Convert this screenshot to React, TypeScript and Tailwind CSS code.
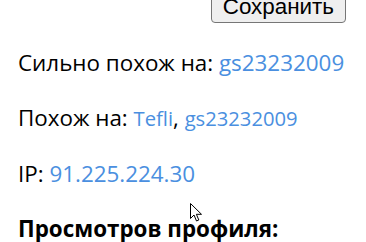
const link = "text-[#4a8fe0]"

export default function App() {
    return (
        <div className="relative h-[242px] w-[366px] overflow-hidden bg-white font-['Open_Sans',sans-serif] text-[22.4px] text-black">
            <div className="flex justify-end pr-[20px] -mt-[10px]">
                <button className="h-[33px] rounded-[4px] border border-[#767676] bg-[#efefef] px-[11px] font-['Liberation_Sans',Arial,sans-serif] text-[22.4px] leading-[24px] text-black">
                    Сохранить
                </button>
            </div>
            <div className="flex flex-col gap-[24px] pl-[18px] pt-[24px] leading-[31px]">
                <p>
                    Сильно похож на: <span className={link}>gs23232009</span>
                </p>
                <p>
                    Похож на: <span className={`${link} text-[20.2px]`}>Tefli</span>,{" "}
                    <span className={`${link} text-[20.2px]`}>gs23232009</span>
                </p>
                <p>
                    IP: <span className={link}>91.225.224.30</span>
                </p>
                <p className="font-bold">Просмотров профиля:</p>
            </div>
            <svg className="absolute left-[190px] top-[203px]" width="13" height="20" viewBox="0 0 13 20">
                <path d="M0.5 0.5 L0.5 15.5 L4 12 L6.5 18 L8.8 17 L6.4 11.3 L11.5 11.3 Z" fill="white" stroke="black" strokeWidth="1" />
            </svg>
        </div>
    )
}
